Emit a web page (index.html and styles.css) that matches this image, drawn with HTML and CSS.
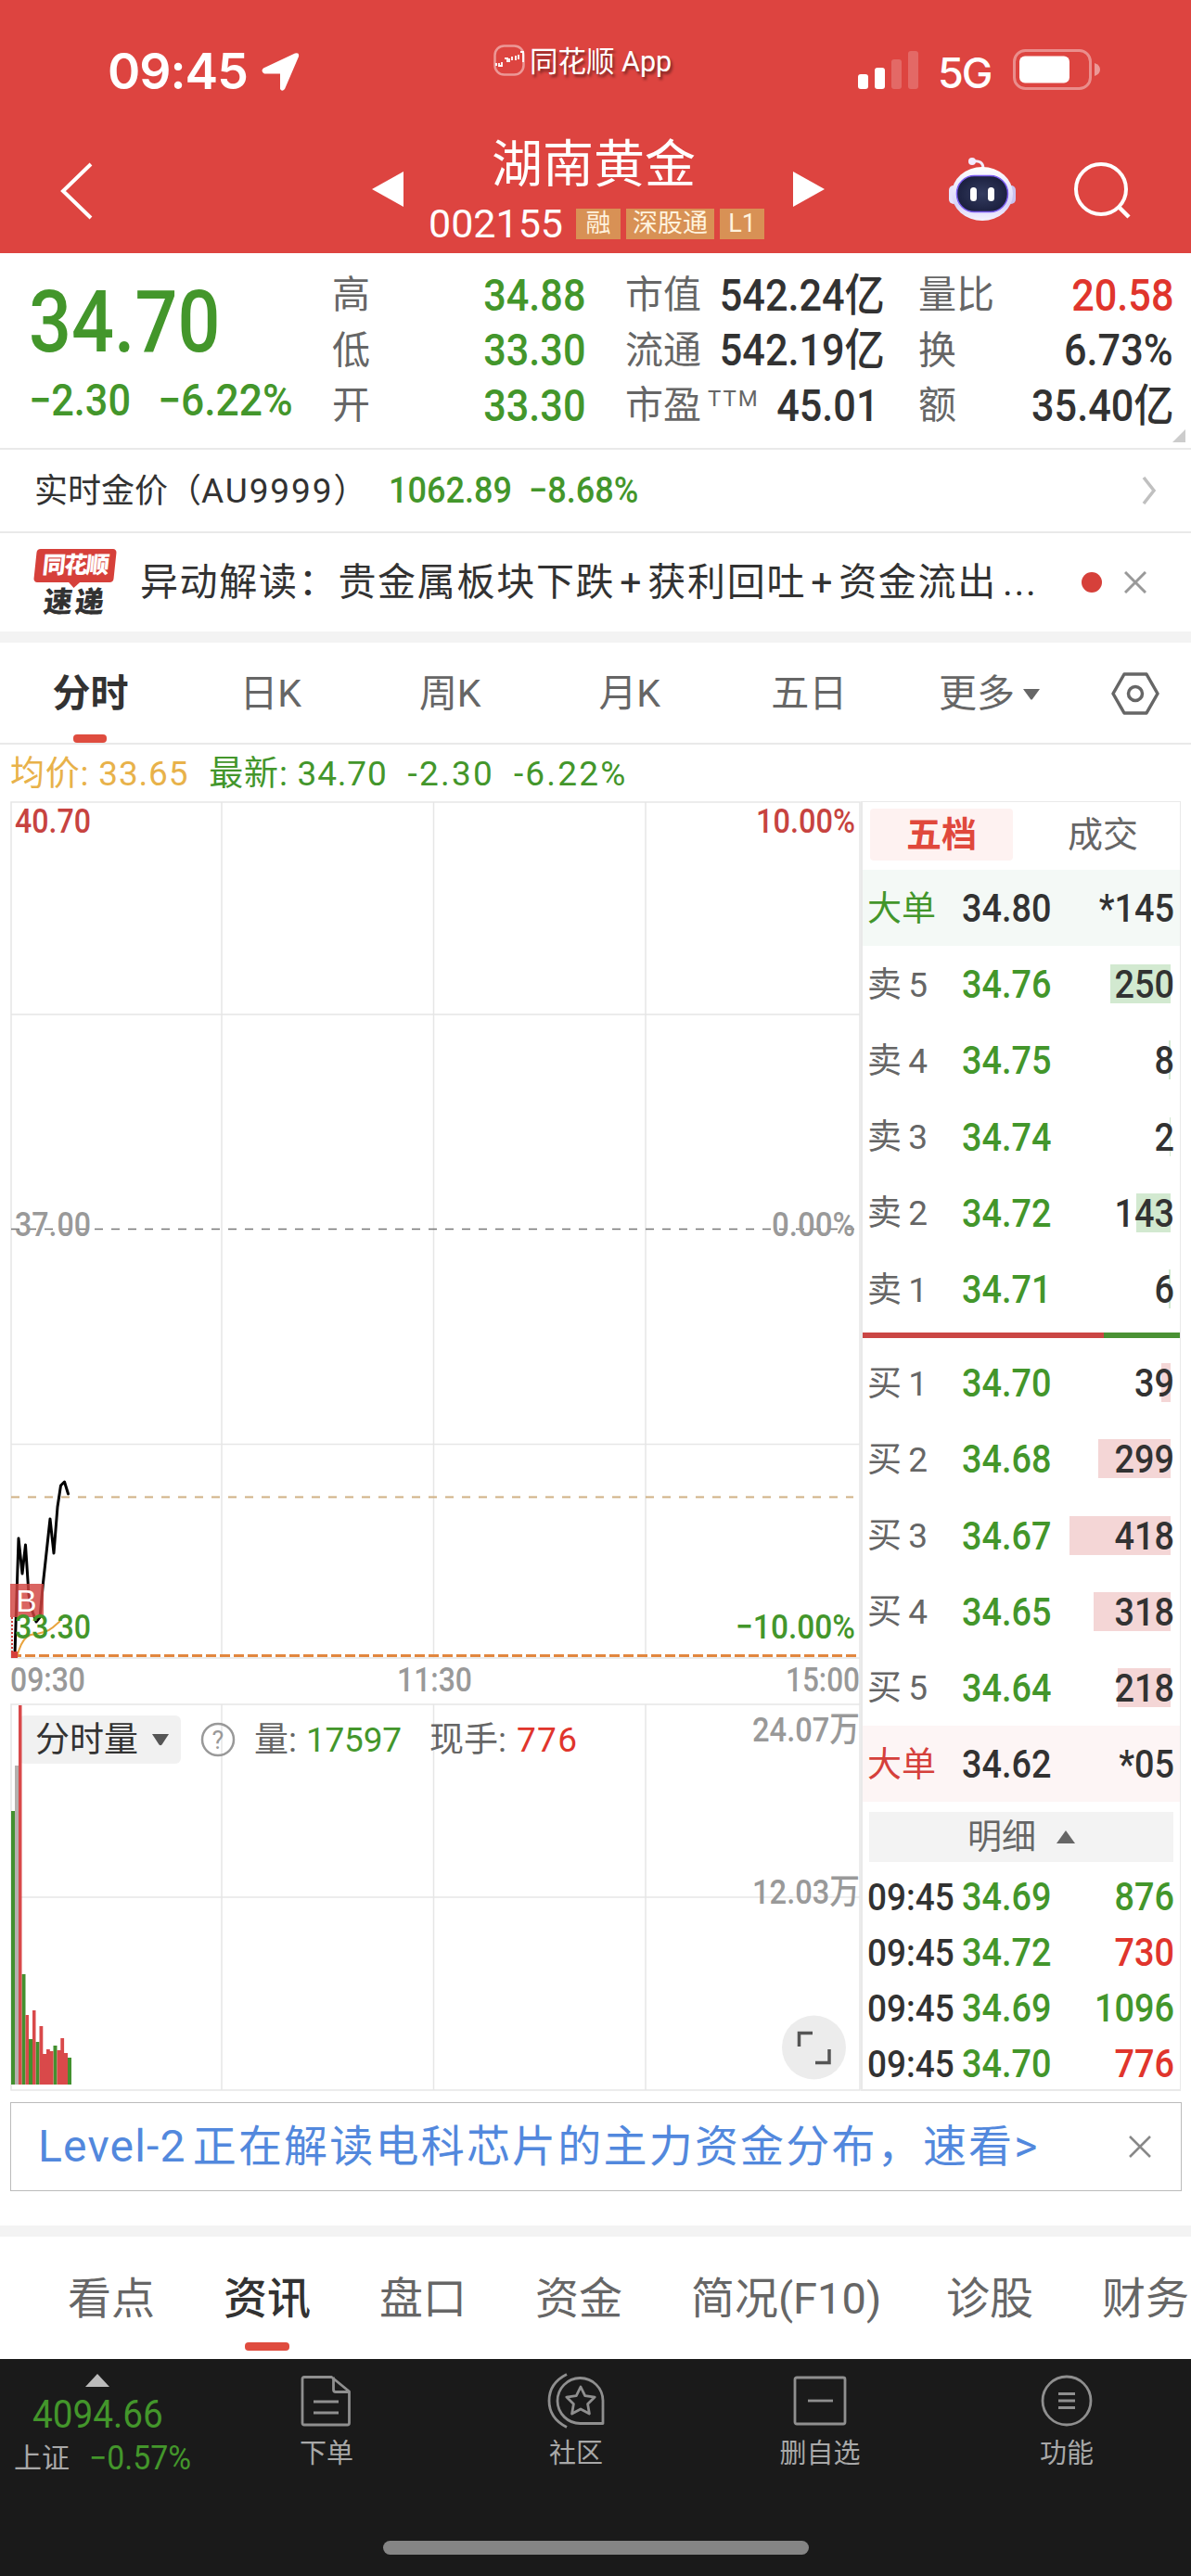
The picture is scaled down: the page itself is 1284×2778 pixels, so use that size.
FILE: index.html
```
<!DOCTYPE html>
<html lang="zh-CN">
<head>
  <meta charset="UTF-8">
  <title>湖南黄金 002155</title>
  <link rel="stylesheet" href="styles.css">
</head>
<body>

  <!-- Header -->
  <header class="header">
    <div class="status-bar">
      <div class="status-time">09:45</div>
      <svg class="status-loc" width="43" height="44" viewBox="0 0 43 44"><path d="M3 18.500 37 2.500q5-1.500 4 3.500L26 41q-3 3.500-5 0V24.500H4Q-.5 22 3 18.500Z" fill="#fff"/></svg>
      <div class="status-app">
        <svg width="34" height="34" viewBox="0 0 34 34"><rect x="1.500" y="1.500" width="31" height="31" rx="10" fill="none" stroke="#fff" stroke-opacity=".45" stroke-width="2.500"/><path d="M3 20v3M6 20v3h3v-4M12 15h3v4M17 15v4M20 13v4M24 12v5M27 11v5M29 8h3v11" stroke="#fff" stroke-width="1.800" fill="none"/></svg>
        <span>同花顺 App</span>
      </div>
      <svg class="status-signal" width="66" height="42" viewBox="0 0 66 42" fill="#fff"><rect y="26" width="11" height="16" rx="3"/><rect x="18" y="19" width="11" height="23" rx="3"/><rect x="36" y="10" width="11" height="32" rx="3" opacity=".2"/><rect x="54" y="1" width="11" height="41" rx="3" opacity=".2"/></svg>
      <div class="status-net">5G</div>
      <svg class="status-battery" width="95" height="44" viewBox="0 0 95 44"><rect x="1.500" y="1.500" width="82" height="41" rx="12" fill="none" stroke="#fff" stroke-opacity=".4" stroke-width="3"/><rect x="7" y="7.500" width="54" height="29" rx="6" fill="#fff"/><path d="M88 15q6 2 6 7t-6 7Z" fill="#fff" fill-opacity=".45"/></svg>
    </div>
    <div class="title-bar">
      <svg class="back" width="36" height="62" viewBox="0 0 36 62"><path d="M33 2 3 31l30 29" fill="none" stroke="#fff" stroke-width="4"/></svg>
      <svg class="prev" width="34" height="38" viewBox="0 0 34 38"><path d="M34 0v38L0 19Z" fill="#fff"/></svg>
      <div class="stock">
        <div class="stock-name">湖南黄金</div>
        <div class="stock-code">002155<span class="tag tag-rong">融</span><span class="tag tag-sz">深股通</span><span class="tag tag-l1">L1</span></div>
      </div>
      <svg class="next" width="34" height="38" viewBox="0 0 34 38"><path d="M0 0v38l34-19Z" fill="#fff"/></svg>
      <svg class="robot" width="74" height="70" viewBox="0 0 74 70">
        <defs>
          <linearGradient id="shell" x1="0" y1="0" x2="0" y2="1"><stop offset="0" stop-color="#fff"/><stop offset=".7" stop-color="#d9d4f8"/><stop offset="1" stop-color="#f4f2ff"/></linearGradient>
          <radialGradient id="face"><stop offset="0" stop-color="#343c60"/><stop offset="1" stop-color="#1c2140"/></radialGradient>
        </defs>
        <path d="M26 5q12-2 12 8" fill="none" stroke="#f0edff" stroke-width="3"/>
        <circle cx="26" cy="5" r="4" fill="#f3ebff"/>
        <rect x="1" y="31" width="10" height="20" rx="5" fill="#e6e2fb"/>
        <rect x="63" y="31" width="10" height="20" rx="5" fill="#c9c3ef"/>
        <ellipse cx="37" cy="40" rx="33" ry="29" fill="url(#shell)"/>
        <rect x="9.500" y="20.500" width="55" height="39" rx="19" fill="url(#face)" stroke="#7b5cf0" stroke-width="1.500"/>
        <rect x="24" y="33" width="7" height="15" rx="3.500" fill="#fff"/>
        <rect x="43" y="33" width="7" height="15" rx="3.500" fill="#fff"/>
      </svg>
      <svg class="search" width="62" height="62" viewBox="0 0 62 62"><circle cx="30" cy="29" r="27" fill="none" stroke="#fff" stroke-width="4"/><path d="m49 48 11 11" stroke="#fff" stroke-width="4.500"/></svg>
    </div>
  </header>

  <!-- Quote -->
  <section class="quote">
    <div class="quote-main">
      <div class="price din green">34.70</div>
      <div class="change green"><span class="din">−2.30</span><span class="din change-pct">−6.22%</span></div>
    </div>
    <div class="quote-col col-1">
      <div><span>高</span><b class="din green">34.88</b></div>
      <div><span>低</span><b class="din green">33.30</b></div>
      <div><span>开</span><b class="din green">33.30</b></div>
    </div>
    <div class="quote-col col-2">
      <div><span>市值</span><b class="din">542.24亿</b></div>
      <div><span>流通</span><b class="din">542.19亿</b></div>
      <div><span>市盈<sup>TTM</sup></span><b class="din">45.01</b></div>
    </div>
    <div class="quote-col col-3">
      <div><span>量比</span><b class="din red">20.58</b></div>
      <div><span>换</span><b class="din">6.73%</b></div>
      <div><span>额</span><b class="din">35.40亿</b></div>
    </div>
    <svg class="corner" width="14" height="14" viewBox="0 0 14 14"><path d="M14 0v14H0Z" fill="#ccc"/></svg>
  </section>

  <section class="gold">
    <span class="gold-name">实时金价（<i>AU9999</i>）</span>
    <span class="gold-price din green">1062.89&nbsp;&nbsp;−8.68%</span>
    <svg width="16" height="30" viewBox="0 0 16 30"><path d="m2 1 11 14L2 29" fill="none" stroke="#c0c0c0" stroke-width="3.500"/></svg>
  </section>

  <section class="news">
    <div class="news-logo">
      <div class="logo-top">同花顺</div>
      <div class="logo-bottom">速递</div>
    </div>
    <div class="news-text">异动解读：贵金属板块下跌<i>+</i>获利回吐<i>+</i>资金流出<em>...</em></div>
    <div class="news-dot"></div>
    <svg width="24" height="24" viewBox="0 0 24 24"><path d="m1 1 22 22M23 1 1 23" stroke="#999" stroke-width="3"/></svg>
  </section>

  <!-- Period tabs -->
  <nav class="tabs">
    <div class="tab active">分时</div>
    <div class="tab">日K</div>
    <div class="tab">周K</div>
    <div class="tab">月K</div>
    <div class="tab">五日</div>
    <div class="tab tab-more">更多<svg width="20" height="13" viewBox="0 0 20 13"><path d="M1 1h18l-8 11q-1 1-2 0Z" fill="#666"/></svg></div>
    <svg class="setting" width="52" height="46" viewBox="0 0 52 46"><path d="M14 2h24l12 21-12 21H14L2 23Z" fill="none" stroke="#666" stroke-width="3.500" stroke-linejoin="round"/><circle cx="26" cy="23" r="7.500" fill="none" stroke="#666" stroke-width="3.500"/></svg>
  </nav>

  <div class="legend">
    <span class="orange">均价: 33.65</span><span class="green">最新: 34.70</span><span class="green">-2.30</span><span class="green">-6.22%</span>
  </div>

  <section class="board">
    <!-- Charts -->
    <div class="charts">
      <svg class="chart" width="920" height="1392" viewBox="11 864 920 1392">
        <!-- grid -->
        <g fill="none" stroke="#e6e6e6" stroke-width="1.500">
          <path d="M12 1788V865H927V1788M12 1788H927M239 865V1788M467.500 865V1788M696 865V1788M12 1094H927M12 1557.500H927"/>
          <path d="M12 1838H927V2254H12ZM239 1838V2254M467.500 1838V2254M696 1838V2254M12 2046H927"/>
          <path d="M927 1788V1838"/>
        </g>
        <path d="M12 1325.500H923" stroke="#777" stroke-width="1.500" stroke-dasharray="9 9"/>
        <path d="M12 1614.500H920" stroke="#d0b184" stroke-width="1.800" stroke-dasharray="9 9"/>

        <!-- price and average lines -->
        <path d="M12 1785.500H923" stroke="#e2873f" stroke-width="3" stroke-dasharray="11 4"/>
        <path d="M16 1784 20 1659 24 1697 27.500 1666 31 1720 35 1738 39 1749 43 1744 46.500 1707 54 1638 58 1675 62 1625 65.500 1602 69.500 1598 73.500 1611" fill="none" stroke="#000" stroke-width="3" stroke-linejoin="round" stroke-linecap="round"/>
        <path d="M19 1784Q24 1766 33 1763 50 1761 57 1755L65 1748" fill="none" stroke="#e9a33c" stroke-width="2"/>
        <path d="M13 1744V1788" stroke="#d5403b" stroke-width="2" stroke-dasharray="2 2"/>
        <rect x="12" y="1781" width="7" height="7" fill="#d5403b"/>
        <rect x="11" y="1708" width="36" height="36" fill="#d2433f" fill-opacity=".82"/>
        <text class="mark" x="28.500" y="1738" text-anchor="middle">B</text>

        <!-- axis labels -->
        <g class="axis">
          <text x="16" y="898" fill="#c74340" textLength="82" lengthAdjust="spacingAndGlyphs">40.70</text>
          <text x="815" y="898" fill="#c74340" textLength="107" lengthAdjust="spacingAndGlyphs">10.00%</text>
          <text x="16" y="1333" fill="#999" textLength="82" lengthAdjust="spacingAndGlyphs">37.00</text>
          <text x="832" y="1333" fill="#999" textLength="90" lengthAdjust="spacingAndGlyphs">0.00%</text>
          <text x="16" y="1767" fill="#43962b" textLength="82" lengthAdjust="spacingAndGlyphs">33.30</text>
          <text x="793" y="1767" fill="#43962b" textLength="129" lengthAdjust="spacingAndGlyphs">−10.00%</text>
          <text x="11" y="1824" fill="#999" textLength="81" lengthAdjust="spacingAndGlyphs">09:30</text>
          <text x="428" y="1824" fill="#999" textLength="81" lengthAdjust="spacingAndGlyphs">11:30</text>
          <text x="847" y="1824" fill="#999" textLength="80" lengthAdjust="spacingAndGlyphs">15:00</text>
          <text x="811" y="1878" fill="#999" textLength="116" lengthAdjust="spacingAndGlyphs">24.07万</text>
          <text x="811" y="2053" fill="#999" textLength="116" lengthAdjust="spacingAndGlyphs">12.03万</text>
        </g>

        <!-- volume header -->
        <rect x="20" y="1850" width="175" height="52" rx="6" fill="#f1f1f1"/>
        <text class="vol" x="38" y="1889" fill="#333">分时量</text>
        <path d="M164 1870H182L174.500 1881.500Q173 1883 171.500 1881.500Z" fill="#555"/>
        <circle cx="235" cy="1876" r="17" fill="none" stroke="#999" stroke-width="2.500"/>
        <text class="help" x="235" y="1886" text-anchor="middle" fill="#999">?</text>
        <text class="vol" x="274" y="1889" fill="#666">量:</text>
        <text class="vol" x="330" y="1889" fill="#43962b" textLength="103">17597</text>
        <text class="vol" x="463" y="1889" fill="#666">现手:</text>
        <text class="vol" x="557" y="1889" fill="#e0352c" textLength="65">776</text>

        <!-- volume bars -->
        <g fill="#43902f">
          <path d="M12 2248V1953h4V2248ZM23.500 2248V2129h4V2248ZM31 2248V2199h4V2248ZM38.500 2248V2202h4V2248ZM57.500 2248V2206h4V2248ZM73 2248V2219h4V2248Z"/>
        </g>
        <path d="M16 2248V1904h4V2248Z" fill="#b5b0ae"/>
        <g fill="#d9494a">
          <path d="M20 2248V1839h3.500V2248ZM27.500 2248V2173h3.500V2248ZM35 2248V2168h3.500V2248ZM42.500 2248V2185h3.800V2248ZM46.300 2248V2215h3.700V2248ZM50 2248V2210h3.800V2248ZM53.800 2248V2212h3.700V2248ZM61.500 2248V2211h3.800V2248ZM65.300 2248V2198h3.800V2248ZM69.100 2248V2214h3.900V2248Z"/>
        </g>

        <!-- fullscreen button -->
        <circle cx="877.500" cy="2208" r="34.500" fill="#ececec"/>
        <path d="M861.500 2207V2192.500H876M894 2210V2224.500H879" fill="none" stroke="#555" stroke-width="3.500"/>
      </svg>
    </div>

    <!-- Order book -->
    <div class="book">
      <div class="book-tabs"><div class="book-tab on">五档</div><div class="book-tab off">成交</div></div>
      <div class="row big sell"><span class="green">大单</span><b class="din">34.80</b><b class="din qty">*145</b></div>
      <div class="row"><span>卖 5</span><b class="din green">34.76</b><b class="din qty">250</b><i class="bar g" style="width:65px"></i></div>
      <div class="row"><span>卖 4</span><b class="din green">34.75</b><b class="din qty">8</b><i class="bar g" style="width:2px"></i></div>
      <div class="row"><span>卖 3</span><b class="din green">34.74</b><b class="din qty">2</b><i class="bar g" style="width:1px"></i></div>
      <div class="row"><span>卖 2</span><b class="din green">34.72</b><b class="din qty">143</b><i class="bar g" style="width:37px"></i></div>
      <div class="row"><span>卖 1</span><b class="din green">34.71</b><b class="din qty">6</b><i class="bar g" style="width:2px"></i></div>
      <div class="ratio"><div style="width:76%"></div></div>
      <div class="row"><span>买 1</span><b class="din green">34.70</b><b class="din qty">39</b><i class="bar r" style="width:10px"></i></div>
      <div class="row"><span>买 2</span><b class="din green">34.68</b><b class="din qty">299</b><i class="bar r" style="width:78px"></i></div>
      <div class="row"><span>买 3</span><b class="din green">34.67</b><b class="din qty">418</b><i class="bar r" style="width:109px"></i></div>
      <div class="row"><span>买 4</span><b class="din green">34.65</b><b class="din qty">318</b><i class="bar r" style="width:83px"></i></div>
      <div class="row"><span>买 5</span><b class="din green">34.64</b><b class="din qty">218</b><i class="bar r" style="width:57px"></i></div>
      <div class="row big buy"><span class="crimson">大单</span><b class="din">34.62</b><b class="din qty">*05</b></div>
      <div class="detail">明细<svg width="20" height="14" viewBox="0 0 20 14"><path d="M10 0l10 14H0Z" fill="#666"/></svg></div>
      <div class="row deal"><b class="din time">09:45</b><b class="din green">34.69</b><b class="din qty green">876</b></div>
      <div class="row deal"><b class="din time">09:45</b><b class="din green">34.72</b><b class="din qty red">730</b></div>
      <div class="row deal"><b class="din time">09:45</b><b class="din green">34.69</b><b class="din qty green">1096</b></div>
      <div class="row deal"><b class="din time">09:45</b><b class="din green">34.70</b><b class="din qty red">776</b></div>
    </div>
  </section>

  <div class="level2">
    <span><i class="level2-name">Level-2</i>正在解读电科芯片的主力资金分布，速看<i>&gt;</i></span>
    <svg width="24" height="24" viewBox="0 0 24 24"><path d="m1 1 22 22M23 1 1 23" stroke="#888" stroke-width="2.500"/></svg>
  </div>

  <!-- Info tabs -->
  <nav class="info-tabs">
    <div>看点</div>
    <div class="active">资讯</div>
    <div>盘口</div>
    <div>资金</div>
    <div class="f10">简况<i>(F10)</i></div>
    <div>诊股</div>
    <div>财务</div>
  </nav>

  <!-- Bottom bar -->
  <footer class="footer">
    <div class="index">
      <svg width="26" height="14" viewBox="0 0 26 14"><path d="M13 0l13 14H0Z" fill="#bbb"/></svg>
      <div class="index-value din">4094.66</div>
      <div class="index-row"><span>上证</span><b class="din">−0.57%</b></div>
    </div>
    <div class="foot-item">
      <svg width="60" height="60" viewBox="0 0 60 60"><path d="M6 4.500h29.500L54.500 20v34q0 2-2 2H6q-2 0-2-2V6.500q0-2 2-2ZM37.500 4.500V18q0 2.500 2.500 2.500h14M16 31h27M16 43h27"/></svg>
      <span>下单</span>
    </div>
    <div class="foot-item club">
      <svg width="62" height="60" viewBox="0 0 62 60"><path d="M60 54.500V30A24.500 24.500 0 1 0 36 54.500ZM21 1.500Q2 11 2 30t19 28.500M36 15l4.700 9.600 10.500 1.500-7.600 7.400 1.800 10.500L36 39l-9.400 5 1.800-10.500-7.600-7.400 10.500-1.500Z"/></svg>
      <span>社区</span>
    </div>
    <div class="foot-item">
      <svg width="60" height="60" viewBox="0 0 60 60"><rect x="3" y="5" width="54" height="50" rx="2"/><path d="M17 30h27"/></svg>
      <span>删自选</span>
    </div>
    <div class="foot-item">
      <svg width="60" height="60" viewBox="0 0 60 60"><circle cx="30" cy="30" r="26"/><path d="M21 22.500h18M21 30h18M21 37.500h18"/></svg>
      <span>功能</span>
    </div>
    <div class="home-bar"></div>
  </footer>

</body>
</html>
```
FILE: styles.css
```
* {
  box-sizing: border-box;
}

body {
  margin: 0;
  width: 1284px;
  height: 2778px;
  overflow: hidden;
  background: #fff;
  color: #323232;
  font-family: Roboto, "Noto Sans CJK SC", sans-serif;
  line-height: 1;
  white-space: nowrap;
}

svg {
  display: block;
  flex: none;
}

i, em {
  font-style: normal;
}

/* narrow figures */
.din {
  display: inline-block;
  font-weight: 500;
  transform: scaleX(.9);
  transform-origin: left center;
}

.green { color: #43962b; }
.red { color: #e0352c; }
.crimson { color: #d5403b; }
.orange { color: #e8b24a; }

/* header */
.header {
  height: 273px;
  background: #dd4440;
  color: #fff;
}

.status-bar {
  display: flex;
  height: 149px;
  padding: 48px 0 0 116px;
}

.status-time {
  width: 165px;
  margin-top: 2px;
  font: 600 53.500px/1 Inter, sans-serif;
  letter-spacing: -1px;
}

.status-loc {
  margin-top: 7px;
}

.status-app {
  display: flex;
  width: 393px;
  margin-left: 208px;
  font-size: 30.500px;
  text-shadow: 2px 3px 3px rgba(0, 0, 0, .45);
}

.status-app span {
  margin: 4px 0 0 5px;
}

.status-signal {
  margin-top: 6px;
}

.status-net {
  width: 81px;
  margin: 8px 0 0 20px;
  font: 500 45px/1 Inter, sans-serif;
  letter-spacing: -2px;
}

.status-battery {
  margin-top: 5px;
}

.title-bar {
  display: flex;
}

.back {
  margin: 26px 0 0 65px;
}

.prev {
  margin: 36px 0 0 300px;
}

.stock {
  width: 368px;
  margin-left: 27px;
}

.stock-name {
  height: 71px;
  padding: 1px 0 0 68px;
  font-size: 55px;
}

.stock-code {
  display: flex;
  font-size: 43px;
}

.tag {
  height: 33px;
  margin: 5px 6px 0 0;
  background: #d89155;
  color: #fff3de;
  font-size: 27px;
  line-height: 33px;
  text-align: center;
}

.tag-rong {
  width: 48px;
  margin-left: 14px;
}

.tag-sz { width: 96px; }
.tag-l1 { width: 48px; }

.next {
  margin: 36px 0 0 25px;
}

.robot {
  margin: 20px 0 0 133px;
}

.search {
  margin: 26px 0 0 61px;
}

/* quote */
.quote {
  position: relative;
  display: flex;
  height: 212px;
  border-bottom: 2px solid #e9e9e9;
}

.quote-main {
  width: 358px;
  padding: 28px 0 0 31px;
}

.price {
  font-size: 93px;
  transform: scaleX(.87);
}

.change {
  display: flex;
  margin-top: 14px;
  font-size: 48px;
}

.change-pct {
  margin-left: 17px;
  transform: scaleX(.925);
}

.quote-col {
  padding-top: 16px;
}

.quote-col div {
  display: flex;
  justify-content: space-between;
  align-items: center;
  height: 59.500px;
}

.quote-col span {
  color: #666;
  font-size: 41px;
}

.quote-col b {
  font-size: 48px;
  transform-origin: right center;
}

.quote-col sup {
  margin-left: 7px;
  font-size: 24px;
  letter-spacing: 2px;
  vertical-align: 13px;
  line-height: 0;
}

.col-1 { width: 273px; }
.col-2 { width: 273px; margin-left: 43px; }
.col-3 { width: 275px; margin-left: 43px; }

.corner {
  position: absolute;
  right: 6px;
  bottom: 6px;
}

.gold {
  display: flex;
  align-items: center;
  height: 90px;
  padding: 0 37px;
  border-bottom: 2px solid #e9e9e9;
}

.gold-name {
  width: 382px;
  font-size: 36px;
}

.gold-name i {
  font-size: 37px;
  letter-spacing: 1.900px;
}

.gold-price {
  flex: 1;
  font-size: 39px;
  transform: scaleX(.925);
}

/* news */
.news {
  display: flex;
  align-items: center;
  height: 118px;
  padding: 0 48px 0 38px;
  border-bottom: 12px solid #f3f3f3;
}

.news-logo {
  width: 113px;
  font-weight: 900;
  text-align: center;
}

.logo-top {
  position: relative;
  width: 86px;
  height: 36px;
  border-radius: 4px;
  background: #d6403a;
  color: #fff;
  font-size: 25px;
  line-height: 36px;
  letter-spacing: -1.500px;
  transform: skewX(-6deg);
}

.logo-top::after {
  content: "";
  position: absolute;
  left: 37px;
  top: 35px;
  border: 7px solid transparent;
  border-top-color: #d6403a;
  border-bottom: 0;
}

.logo-bottom {
  width: 86px;
  margin-top: 6px;
  font-size: 31px;
  letter-spacing: 3px;
  transform: skewX(-6deg);
}

.news-text {
  width: 1016px;
  font-size: 41px;
  letter-spacing: 1.700px;
}

.news-text i {
  display: inline-block;
  width: 35px;
  text-align: center;
}

.news-text em {
  margin-left: 6px;
}

.news-dot {
  width: 22px;
  height: 22px;
  margin-right: 24px;
  border-radius: 50%;
  background: #d6403a;
}

/* tabs */
.tabs {
  display: flex;
  align-items: center;
  height: 110px;
  padding-top: 2px;
  border-bottom: 2px solid #e9e9e9;
  color: #666;
  font-size: 41px;
}

.tab {
  position: relative;
  width: 193.500px;
  text-align: center;
}

.tab.active {
  width: 195px;
  color: #323232;
  font-weight: 600;
}

.tab.active::after {
  content: "";
  position: absolute;
  left: 79px;
  top: 64px;
  width: 36px;
  height: 9px;
  border-radius: 4px;
  background: #df4c3f;
}

.tab-more {
  display: flex;
  align-items: center;
  width: 110px;
  margin-left: 43px;
}

.tab-more svg {
  margin-left: 8px;
}

.setting {
  margin-left: 76px;
}

.legend {
  display: flex;
  height: 61px;
  padding: 13px 0 0 11px;
  font-size: 37px;
}

.legend span {
  margin-right: 22px;
  letter-spacing: .800px;
}

.legend span:nth-child(n + 3) {
  letter-spacing: 2.200px;
  margin-right: 21px;
}

/* chart + order book */
.board {
  display: flex;
  height: 1391px;
  margin: 0 11px;
}

.charts {
  width: 917px;
}

.axis text {
  font-size: 37px;
  font-weight: 500;
}

.vol {
  font-size: 37px;
}

.mark {
  fill: #fff;
  font: 33px "Liberation Sans", sans-serif;
}

.help {
  font-size: 27px;
}

.book {
  position: relative;
  width: 345px;
  border: 2px solid #e9e9e9;
  border-width: 1px 1px 2px 2px;
}

.book-tabs {
  display: flex;
  height: 73px;
  padding: 7px 0 0 8px;
}

.book-tab {
  width: 154px;
  height: 56px;
  border-radius: 4px;
  color: #666;
  font-size: 38px;
  line-height: 56px;
  text-align: center;
}

.book-tab.on {
  background: #fef2f1;
  color: #e0483c;
  font-weight: 600;
}

.book-tab.off {
  margin-left: 20px;
}

.row {
  position: relative;
  display: flex;
  align-items: center;
  height: 82.200px;
  padding: 2px 6px 0 5px;
}

.row span {
  width: 102px;
  color: #666;
  font-size: 37px;
  word-spacing: -2px;
}

.row b {
  width: 100px;
  font-size: 42px;
}

.row .qty {
  flex: 1;
  width: auto;
  text-align: right;
  transform-origin: right center;
  z-index: 1;
}

.row.sell { background: #f4f9f6; }
.row.buy { background: #fdf5f5; }
.row .green { color: #43962b; }
.row .crimson { color: #d5403b; }

/* size of the queue, behind the figure */
.bar {
  position: absolute;
  right: 10px;
  top: 20px;
  height: 42px;
}

.bar.g { background: #d2e9d0; }
.bar.r { background: #f4d6d6; }

.ratio {
  height: 6px;
  margin: 6px 0 7px;
  background: #4a9234;
}

.ratio div {
  height: 6px;
  background: #ca4644;
}

.detail {
  display: flex;
  align-items: center;
  justify-content: center;
  height: 54px;
  margin: 11px 7px 7px 7px;
  background: #f3f3f3;
  color: #666;
  font-size: 37px;
}

.detail svg {
  margin-left: 22px;
}

.row.deal {
  height: 60px;
}

.row .time {
  width: 102px;
  font-size: 41px;
}

/* level-2 banner */
.level2 {
  display: flex;
  align-items: center;
  justify-content: space-between;
  height: 96px;
  margin: 12px 10px 37px 11px;
  padding: 0 32px 0 29px;
  border: 1.500px solid #bbb;
  color: #5288dd;
  font-size: 47px;
  letter-spacing: 2.200px;
}

.level2 i {
  font-size: 48px;
  letter-spacing: 1.200px;
}

.level2-name {
  margin-right: 7px;
}

/* info tabs */
.info-tabs {
  display: flex;
  height: 144px;
  padding: 43px 0 0 73px;
  border-top: 12px solid #f3f3f3;
  color: #666;
  font-size: 47px;
  overflow: hidden;
}

.info-tabs div {
  position: relative;
  flex: none;
  width: 168px;
}

.info-tabs .f10 {
  width: 275px;
}

.info-tabs .active {
  color: #323232;
  font-weight: 500;
}

.info-tabs .active::after {
  content: "";
  position: absolute;
  left: 23px;
  top: 71px;
  width: 48px;
  height: 9px;
  border-radius: 4px;
  background: #df4c3f;
}

/* footer */
.footer {
  position: relative;
  display: flex;
  height: 235px;
  background: #1a1a1a;
  color: #a8a8a8;
}

.index {
  width: 219px;
  padding: 16px 0 0 15px;
}

.index svg {
  margin-left: 77px;
}

.index-value {
  margin: 8px 0 0 20px;
  font-size: 43px;
  font-weight: 400;
  color: #43962b;
}

.index-row {
  display: flex;
  align-items: center;
  margin-top: 8px;
  font-size: 30px;
}

.index-row b {
  margin-left: 21px;
  font-size: 36px;
  font-weight: 400;
  color: #43962b;
  transform: scaleX(.94);
}

.foot-item {
  display: flex;
  flex-direction: column;
  align-items: center;
  width: 266px;
  padding-top: 15px;
  font-size: 29px;
}

.foot-item.club {
  padding-left: 6px;
}

.foot-item svg {
  margin-bottom: 13px;
  fill: none;
  stroke: #8f8f8f;
  stroke-width: 2.800;
  stroke-linejoin: round;
}

.home-bar {
  position: absolute;
  left: 413px;
  bottom: 24px;
  width: 459px;
  height: 15px;
  border-radius: 8px;
  background: #858585;
}
```
